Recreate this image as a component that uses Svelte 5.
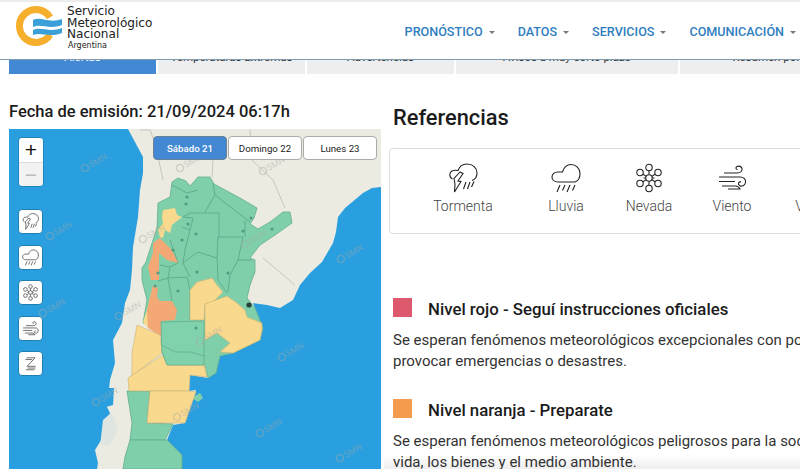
<script>
  const tabs = ['Alertas', 'Temperaturas Extremas', 'Advertencias', 'Avisos a muy corto plazo', 'Resumen por provincia']
  const menu = ['PRONÓSTICO', 'DATOS', 'SERVICIOS', 'COMUNICACIÓN']
  const days = ['Sábado 21', 'Domingo 22', 'Lunes 23']
  const refs = [
    { icon: 'storm', label: 'Tormenta' },
    { icon: 'rain', label: 'Lluvia' },
    { icon: 'snow', label: 'Nevada' },
    { icon: 'wind', label: 'Viento' },
    { icon: 'zonda', label: 'Viento Zonda' }
  ]
  const levels = [
    {
      color: 'red',
      title: 'Nivel rojo - Seguí instrucciones oficiales',
      lines: ['Se esperan fenómenos meteorológicos excepcionales con potencial de', 'provocar emergencias o desastres.']
    },
    {
      color: 'orange',
      title: 'Nivel naranja - Preparate',
      lines: ['Se esperan fenómenos meteorológicos peligrosos para la sociedad, la', 'vida, los bienes y el medio ambiente.']
    }
  ]

  const marks = [[85,168],[50,236],[143,239],[180,168],[263,171],[245,244],[341,259],[43,313],[119,316],[200,341],[282,357],[96,402],[177,417],[260,433],[340,458]]
  const dots = [[187,197],[186,204],[188,224],[196,234],[182,240],[173,250],[251,218],[243,231],[197,272],[228,273],[158,273],[178,291],[196,328],[272,229],[155,286]]
  const borders = [
    '172,185 187,193 198,190', '213,183 215,195 205,212', '190,213 219,213 219,237', '215,195 250,222',
    '245,220 245,237', '218,237 243,237', '218,237 217,258 218,280 227,293', '243,237 238,260 230,275 228,292',
    '238,260 252,260', '183,263 198,252 217,258', '168,278 187,277 190,290', '183,217 193,218 190,230 182,227',
    '190,230 185,250 183,263 190,277', '168,278 170,267 160,265', '190,213 183,217', '170,240 178,263 170,267',
    '158,281 168,278 172,301', '190,320 190,290'
  ]
  const countries = ['150,130 155,143 163,180', '250,130 252,160 273,180 285,208', '213,160 212,177', '263,258 295,285', '140,130 150,130']
</script>

<svg class="defs" width="0" height="0" aria-hidden="true">
  <symbol id="storm" viewBox="0 0 30 30">
    <path d="M4.500 16 C1 14.500 1 9.500 4 8 C6 7 8 7 10 7.500 C11.500 3 15.500 1 19 1 C25 1 29 5 29 10 C29 14 27 16.500 24 17.500" />
    <path d="M12 9 L6 15.500 L7 21 L6.500 29 L13 18.500 L10 18 L15 10.500 Z" />
    <path d="M18 19 L15.500 26 M22 19 L19.500 26 M26 18.500 L23.500 24" />
  </symbol>
  <symbol id="rain" viewBox="0 0 30 30">
    <path d="M7 19 C3 19 1 16.500 1 14 C1 11 3.500 9 7 9 L11.500 9 C13 4 16.500 1.500 20 1.500 C25 1.500 29 5.500 29 10.500 C29 15 27 18 24 19 Z" />
    <path d="M9 22 L6 29 M14 22 L11.500 27.500 M19 22 L16 29 M24 22 L21.500 27.500" />
  </symbol>
  <symbol id="snow" viewBox="0 0 30 30">
    <circle cx="15" cy="15" r="3.200" />
    <circle cx="15" cy="4.500" r="3.200" /><circle cx="15" cy="25.500" r="3.200" />
    <circle cx="6" cy="9.500" r="3.200" /><circle cx="24" cy="9.500" r="3.200" />
    <circle cx="6" cy="20.500" r="3.200" /><circle cx="24" cy="20.500" r="3.200" />
    <path d="M15 7.700 V11.800 M15 18.200 V22.300 M9 11.200 L12.200 13.400 M21 11.200 L17.800 13.400 M9 18.800 L12.200 16.600 M21 18.800 L17.800 16.600 M9.500 15 H11.800 M18.200 15 H20.500" />
  </symbol>
  <symbol id="wind" viewBox="0 0 30 30">
    <path d="M7 10 H20 C24 10 25.500 7.500 25 5.500 C24.500 3.500 22 2.500 20 3.500 C18.500 4.300 18.500 6.500 20.500 6.500" />
    <path d="M2 14 H23 C27 14 29 16.500 28.500 19.500 C28 22.500 24.500 24 22.500 22.500 C20.500 21 21.500 18.500 24 19" />
    <path d="M2 18.500 H18 M5 23 H19 C21 23.500 22.500 24.500 23 26 H11" />
  </symbol>
  <symbol id="zonda" viewBox="0 0 30 30">
    <path d="M8 5 H23 L9 20 H24 M6 8 H18 M10 23 H24 M7 26 H22" />
  </symbol>
</svg>

<div class="page">
  <header class="top">
    <div class="brand">
      <svg class="logo" viewBox="0 0 52 44" width="52" height="44">
        <path d="M37 13.300 A16.500 16.500 0 1 0 37 30.700" fill="none" stroke="#f6ae2d" stroke-width="7" />
        <path d="M20 16 C28 12 36 20 49 15 L49 21 C36 26 28 19 20 23 Z" fill="#3b9fd8" />
        <path d="M20 26 C28 22 36 29 49 24 L49 29 C36 34 28 28 20 31 Z" fill="#3b9fd8" />
      </svg>
      <div class="brand-text">
        <span>Servicio</span>
        <span>Meteorológico</span>
        <span>Nacional</span>
        <small>Argentina</small>
      </div>
    </div>
    <nav>
      {#each menu as item}
        <a href="#top">{item}<i></i></a>
      {/each}
    </nav>
  </header>

  <div class="tabs">
    {#each tabs as tab, i}
      <div class="tab" class:active={i === 0}>{tab}</div>
    {/each}
  </div>

  <main>
    <section class="left">
      <h2>Fecha de emisión: 21/09/2024 06:17h</h2>
      <div class="map">
        <svg class="land" viewBox="9 129 372 340" width="372" height="340">
          <rect x="9" y="129" width="372" height="340" fill="#ecebe1" />
          <polygon fill="#2a9fdf" points="9,129 128,129 143,157 143,173 140,190 138,217 133,247 132,270 130,290 125,303 122,323 113,340 115,363 110,380 107,407 110,413 103,437 95,450 98,463 97,469 9,469" />
          <polygon fill="#2a9fdf" points="381,187 372,188 363,193 345,208 338,217 336,232 333,243 322,262 310,273 300,285 293,300 280,308 267,305 253,303 263,328 260,340 233,353 220,356 216,373 208,378 190,375 189,391 196,390 193,400 185,423 173,425 167,440 182,455 182,469 381,469" />
          <polygon fill="#2a9fdf" points="108,388 114,388 113,405 106,407" />
          <polygon fill="#dfe6e2" points="103,420 112,412 118,430 110,445 100,446" />

          {#each countries as c}
            <polyline points={c} fill="none" stroke="#bdbdb6" stroke-width="0.800" />
          {/each}

          <polygon fill="#7fd0aa" stroke="#62ad8e" stroke-width="0.800" points="172,182 178,178 186,181 190,186 198,177 210,177 214,184 240,198 257,208 254,218 250,224 258,229 270,222 283,212 290,212 292,223 275,235 260,245 250,258 255,260 255,272 250,285 247,298 255,308 263,328 260,340 233,353 220,356 216,373 208,378 205,365 167,365 162,352 161,322 143,323 147,300 142,280 142,268 146,262 152,243 157,228 158,203 170,197" />
          <polygon fill="#7fd0aa" stroke="#62ad8e" stroke-width="0.800" points="127,391 150,391 147,423 173,424 165,440 130,440 132,423" />
          <polygon fill="#7fd0aa" stroke="#62ad8e" stroke-width="0.800" points="130,440 167,440 182,455 182,469 123,469 125,457" />
          <polygon fill="#7fd0aa" points="192,398 200,393 203,398 198,402" />

          {#each borders as b}
            <polyline points={b} fill="none" stroke="#5fa888" stroke-width="0.900" />
          {/each}

          <polygon fill="#f8d98e" points="163,210 175,208 177,215 182,217 172,225 170,233 165,230 163,238 160,237 158,230 163,223 162,217" />
          <polygon fill="#f8d98e" points="151,293 147,310 143,322 148,328" />
          <polygon fill="#f3a876" points="153,243 160,238 172,250 178,263 167,260 159,253 159,280 151,280 148,267 153,253" />
          <polygon fill="#f3a876" points="153,285 158,288 157,297 160,301 172,301 177,310 175,320 162,321 162,337 148,328 147,310 151,293" />
          <polygon fill="#f8d98e" stroke="#c9b277" stroke-width="0.600" points="190,290 197,282 212,278 217,285 223,292 212,303 205,304 204,320 190,320" />
          <polygon fill="#f8d98e" stroke="#c9b277" stroke-width="0.600" points="205,304 227,296 237,303 245,310 247,317 262,323 262,330 260,340 233,353 220,352 230,343 217,333 205,340" />
          <polygon fill="#f8d98e" stroke="#c9b277" stroke-width="0.600" points="137,325 160,335 162,353 137,372 132,378 132,353" />
          <polygon fill="#f8d98e" stroke="#c9b277" stroke-width="0.600" points="163,355 167,365 204,365 207,377 190,375 189,391 129,391 128,378 137,372" />
          <polygon fill="#f8d98e" stroke="#c9b277" stroke-width="0.600" points="150,391 189,391 196,392 193,400 185,423 147,423" />
          <polygon fill="#80d2ad" stroke="#62ad8e" stroke-width="0.800" points="161,322 204,321 204,365 167,365 162,352" />
          <polyline points="162,345 175,352 190,352 204,356" fill="none" stroke="#62ad8e" stroke-width="0.800" />

          {#each dots as d}
            <circle cx={d[0]} cy={d[1]} r="1.600" fill="#4f9c80" />
          {/each}
          <circle cx="249" cy="305" r="2.600" fill="#27403a" />

          {#each marks as m}
            <g class="mark" transform="translate({m[0]} {m[1]}) rotate(-30)">
              <circle r="3.500" fill="none" stroke="#a9a9a4" stroke-width="1.500" />
              <text x="5" y="3">SMN</text>
            </g>
          {/each}
        </svg>

        <div class="days">
          {#each days as day, i}
            <button class:on={i === 0}>{day}</button>
          {/each}
        </div>

        <div class="zoom">
          <button>+</button>
          <button class="off">−</button>
        </div>

        <div class="layers">
          {#each refs as r}
            <button aria-label={r.label}>
              <svg width="17" height="17"><use href="#{r.icon}" /></svg>
            </button>
          {/each}
        </div>
      </div>
    </section>

    <section class="right">
      <h1>Referencias</h1>
      <div class="card">
        {#each refs as r}
          <div class="ref">
            <svg width="30" height="30"><use href="#{r.icon}" /></svg>
            <span>{r.label}</span>
          </div>
        {/each}
      </div>

      <div class="levels">
        {#each levels as l}
          <article>
            <h3><b class={l.color}></b>{l.title}</h3>
            {#each l.lines as line}
              <p>{line}</p>
            {/each}
          </article>
        {/each}
      </div>
      <div class="fade"></div>
    </section>
  </main>
</div>

<style>
  :global(body) {
    margin: 0;
    background: #fff;
  }

  .defs {
    position: absolute;
  }

  symbol {
    overflow: visible;
  }

  .page {
    width: 800px;
    height: 469px;
    overflow: hidden;
    font-family: Roboto, "Liberation Sans", sans-serif;
    color: #1b1b1b;
  }

  .top {
    position: relative;
    z-index: 2;
    display: flex;
    justify-content: space-between;
    height: 57px;
    background: #fff;
    border-top: 2px solid #ececec;
    border-bottom: 1px solid #7d9db5;
  }

  .brand {
    display: flex;
    align-items: flex-start;
    padding: 2px 0 0 13px;
    gap: 1px;
  }

  .brand-text {
    display: flex;
    flex-direction: column;
    padding: 2px 0 0 1px;
    font-family: "DejaVu Sans", sans-serif;
    font-size: 12.100px;
    line-height: 11.500px;
    color: #222;
  }

  .brand-text small {
    font-size: 8px;
    line-height: 10px;
    padding-left: 1px;
  }

  nav {
    display: flex;
    gap: 23px;
    padding: 22px 0 0 0;
    margin-right: 4px;
  }

  nav a {
    color: #2f7ebf;
    font-size: 12.600px;
    font-weight: 500;
    line-height: 16px;
    text-decoration: none;
    white-space: nowrap;
  }

  nav i {
    display: inline-block;
    margin: 0 0 2px 6px;
    border-left: 3px solid transparent;
    border-right: 3px solid transparent;
    border-top: 3px solid #777;
  }

  .tabs {
    display: flex;
    gap: 2px;
    height: 30px;
    margin: -16px 0 0 9px;
    width: 1000px;
    font-size: 11.500px;
  }

  .tab {
    display: flex;
    justify-content: center;
    padding-top: 6px;
    width: 147px;
    height: 24px;
    background: #eee;
    color: #333;
    white-space: nowrap;
  }

  .tab.active {
    background: #4388d2;
    color: #fff;
  }

  .tab:nth-child(4),
  .tab:nth-child(5) {
    width: 222px;
  }

  main {
    display: grid;
    grid-template-columns: 372px 1fr;
    padding-left: 9px;
  }

  h2 {
    margin: 0;
    padding-top: 25px;
    height: 30px;
    font-size: 16.500px;
    line-height: 26px;
    font-weight: 500;
    white-space: nowrap;
  }

  .map {
    position: relative;
    height: 340px;
    overflow: hidden;
  }

  .land {
    display: block;
  }

  .mark {
    opacity: 0.42;
  }

  .mark text {
    fill: #a9a9a4;
    font-size: 9px;
    font-family: Roboto, sans-serif;
  }

  .days {
    position: absolute;
    top: 7px;
    left: 144px;
    display: flex;
    gap: 1px;
  }

  .days button {
    width: 74px;
    height: 24px;
    padding: 0;
    background: #fff;
    border: 1px solid #aaa;
    border-radius: 4px;
    font-family: Roboto, sans-serif;
    font-size: 9.700px;
    color: #222;
  }

  .days button.on {
    background: #4388d2;
    border-color: #6b7f96;
    color: #fff;
    font-weight: 500;
  }

  .zoom {
    position: absolute;
    top: 8px;
    left: 9px;
    width: 24px;
    border: 1px solid #1f86bd;
    border-radius: 4px;
    overflow: hidden;
  }

  .zoom button {
    display: block;
    width: 24px;
    height: 24px;
    padding: 0;
    background: #fff;
    border: 0;
    font-family: "Liberation Sans", sans-serif;
    font-size: 21px;
    line-height: 22px;
    color: #111;
  }

  .zoom .off {
    background: #f2f2f2;
    border-top: 1px solid #ddd;
    color: #bbb;
  }

  .layers {
    position: absolute;
    top: 80px;
    left: 9px;
    display: flex;
    flex-direction: column;
    gap: 10.500px;
  }

  .layers button {
    display: flex;
    align-items: center;
    justify-content: center;
    width: 25px;
    height: 25px;
    padding: 0;
    background: #fff;
    border: 1px solid #1f7fb0;
    border-radius: 4px;
  }

  .layers svg {
    fill: none;
    stroke: #666;
    stroke-width: 1.600;
  }

  .right {
    position: relative;
    padding-left: 12px;
    height: 395px;
  }

  h1 {
    margin: 0;
    padding-top: 30px;
    font-size: 21.800px;
    line-height: 28px;
    font-weight: 500;
  }

  .card {
    display: flex;
    box-sizing: border-box;
    width: 480px;
    height: 86px;
    margin: 16px 0 0 -4px;
    padding-top: 14px;
    border: 1px solid #ddd;
    border-radius: 4px;
  }

  .ref {
    display: flex;
    flex-direction: column;
    align-items: center;
    gap: 5px;
    flex: none;
    width: 60px;
    margin-left: 43px;
    font-size: 14px;
    font-weight: 300;
    color: #444;
    white-space: nowrap;
  }

  .ref:nth-child(3) { margin-left: 23px; }
  .ref:nth-child(4) { margin-left: 23px; }
  .ref:nth-child(5) { margin-left: 44px; }

  .ref svg {
    fill: none;
    stroke: #222;
    stroke-width: 1.100;
  }

  .levels {
    display: flex;
    flex-direction: column;
    gap: 28px;
    margin-top: 65px;
    width: 520px;
  }

  h3 {
    display: flex;
    align-items: center;
    gap: 16px;
    margin: 0 0 11px;
    height: 20px;
    font-size: 16.800px;
    font-weight: 500;
    white-space: nowrap;
  }

  h3 b {
    width: 19px;
    height: 19px;
    margin-top: -3px;
  }

  .red {
    background: #dd5a6e;
  }

  .orange {
    background: #f59b4d;
  }

  p {
    margin: 0;
    font-size: 15px;
    line-height: 21px;
    color: #333;
    white-space: nowrap;
  }

  .fade {
    position: absolute;
    left: 3px;
    right: 0;
    bottom: 0;
    height: 14px;
    background: linear-gradient(rgba(0, 0, 0, 0), rgba(0, 0, 0, 0.07));
  }
</style>
